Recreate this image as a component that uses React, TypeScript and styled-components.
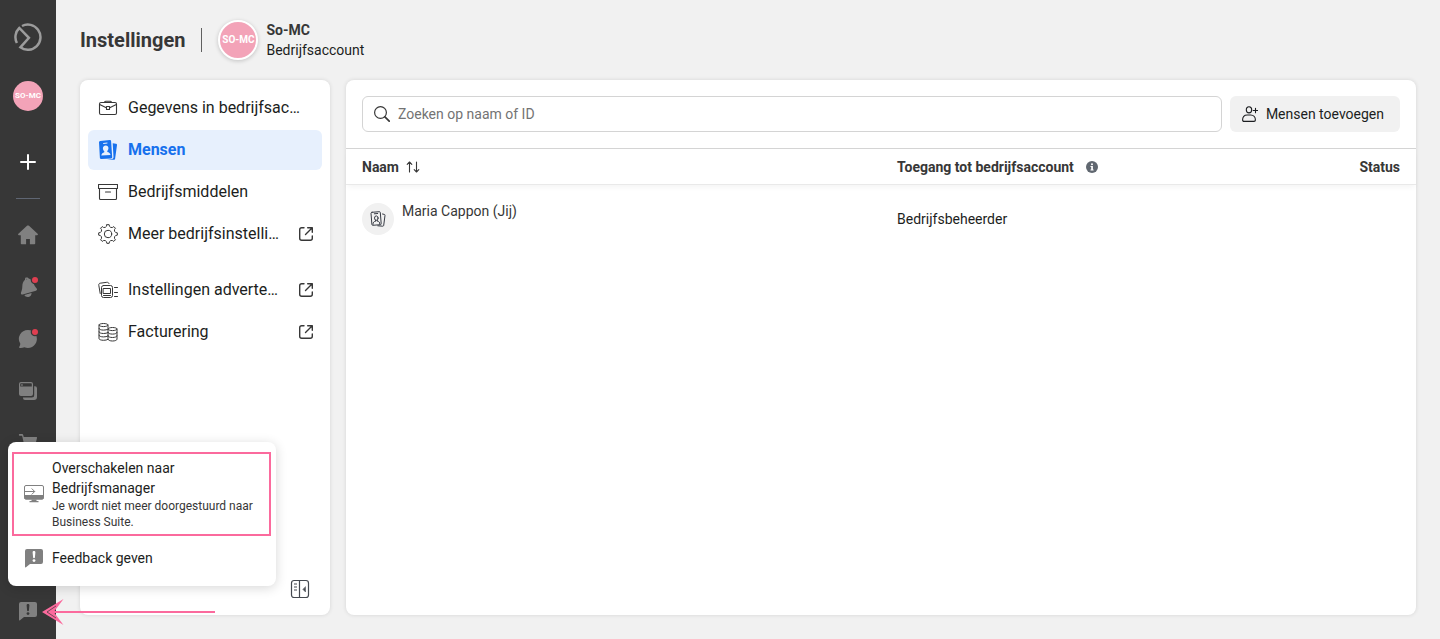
import React from "react";
import styled, { createGlobalStyle } from "styled-components";

const GlobalStyle = createGlobalStyle`
  *, *::before, *::after { box-sizing: border-box; }
  body {
    margin: 0;
    background: #f1f1f1;
    color: #1c1e21;
    font-family: Roboto, "Liberation Sans", sans-serif;
    font-size: 14px;
    line-height: 20px;
  }
  button, input { font: inherit; color: inherit; }
  a { color: inherit; text-decoration: none; }
  svg { display: block; flex: none; }
`;

/* ---------- Layout ---------- */

const Shell = styled.div`
  display: flex;
  min-height: 100vh;
`;

const Rail = styled.nav`
  position: sticky;
  top: 0;
  z-index: 2;
  flex: none;
  display: flex;
  flex-direction: column;
  align-items: center;
  width: 56px;
  height: 100vh;
  padding-bottom: 6px;
  background: #373737;
`;

const RailItems = styled.div`
  flex: 1;
  min-height: 0;
  overflow: hidden;
  display: flex;
  flex-direction: column;
  align-items: center;
  gap: 8px;
`;

const RailButton = styled.button<{ $color?: string }>`
  flex: none;
  display: grid;
  place-items: center;
  width: 44px;
  height: 44px;
  padding: 0;
  border: 0;
  background: none;
  color: ${(p) => p.$color ?? "#808080"};
  cursor: pointer;
`;

const RailLogo = styled.a`
  flex: none;
  display: grid;
  place-items: center;
  width: 56px;
  height: 74px;
  color: #9c9c9c;
`;

const RailAdd = styled(RailButton)`
  margin-top: 22px;
`;

const RailRule = styled.hr`
  flex: none;
  width: 24px;
  height: 1px;
  margin: 14px 0;
  border: 0;
  background: #5f6673;
`;

const RailFooter = styled.div`
  position: relative;
  flex: none;
`;

const Avatar = styled.span<{ $size: number; $ring?: boolean }>`
  flex: none;
  display: grid;
  place-items: center;
  width: ${(p) => p.$size}px;
  height: ${(p) => p.$size}px;
  border: ${(p) => (p.$ring ? "2px solid #fff" : "0")};
  border-radius: 50%;
  background: #f3a3b8;
  box-shadow: ${(p) => (p.$ring ? "0 1px 4px rgba(0, 0, 0, 0.2)" : "none")};
  color: #fff;
  font-size: ${(p) => (p.$ring ? 10 : 8)}px;
  font-weight: 700;
  line-height: 12px;
  white-space: nowrap;
`;

const Main = styled.main`
  flex: 1;
  min-width: 0;
  display: flex;
  flex-direction: column;
  padding: 0 24px 24px;
`;

const Header = styled.header`
  display: flex;
  align-items: center;
  gap: 16px;
  height: 80px;
`;

const Title = styled.h1`
  margin: 0;
  color: #373737;
  font-size: 20px;
  font-weight: 700;
  line-height: 24px;
`;

const HeaderRule = styled.span`
  width: 1px;
  height: 24px;
  background: #606060;
`;

const Account = styled.div`
  display: flex;
  align-items: center;
  gap: 8px;
`;

const AccountName = styled.div`
  color: #373737;
  font-weight: 700;
`;

const Columns = styled.div`
  flex: 1;
  display: flex;
  gap: 16px;
`;

const Card = styled.section`
  border-radius: 8px;
  background: #fff;
  box-shadow: 0 0 4px rgba(0, 0, 0, 0.12);
`;

/* ---------- Settings menu ---------- */

const MenuCard = styled(Card)`
  flex: none;
  display: flex;
  flex-direction: column;
  width: 250px;
  padding: 8px;
`;

const MenuGroup = styled.nav`
  display: flex;
  flex-direction: column;
  gap: 2px;
  margin-bottom: 16px;
`;

const MenuLink = styled.a<{ $active?: boolean }>`
  display: flex;
  align-items: center;
  gap: 10px;
  height: 40px;
  padding: 0 8px 0 10px;
  border-radius: 6px;
  background: ${(p) => (p.$active ? "#e7f0fd" : "transparent")};
  color: ${(p) => (p.$active ? "#1771ed" : "#373737")};
  font-size: 16px;
  font-weight: ${(p) => (p.$active ? 700 : 400)};
`;

const MenuLabel = styled.span<{ $active?: boolean }>`
  flex: 1;
  min-width: 0;
  overflow: hidden;
  color: ${(p) => (p.$active ? "inherit" : "#1c1e21")};
  text-overflow: ellipsis;
  white-space: nowrap;
`;

const CollapseButton = styled.button`
  align-self: flex-end;
  display: grid;
  place-items: center;
  width: 44px;
  height: 36px;
  margin-top: auto;
  padding: 0;
  border: 0;
  background: none;
  color: #444950;
  cursor: pointer;
`;

/* ---------- People ---------- */

const PeopleCard = styled(Card)`
  flex: 1;
  min-width: 0;
`;

const Toolbar = styled.div`
  display: flex;
  gap: 8px;
  padding: 16px;
`;

const SearchBox = styled.label`
  flex: 1;
  display: flex;
  align-items: center;
  gap: 8px;
  height: 36px;
  padding: 0 11px;
  border: 1px solid #d4d4d4;
  border-radius: 6px;
  color: #373737;
`;

const SearchInput = styled.input`
  flex: 1;
  min-width: 0;
  padding: 0;
  border: 0;
  outline: 0;
  background: none;
  &::placeholder { color: #737373; opacity: 1; }
`;

const AddButton = styled.button`
  display: flex;
  align-items: center;
  gap: 8px;
  height: 36px;
  padding: 0 16px 0 12px;
  border: 0;
  border-radius: 6px;
  background: #f1f1f1;
  cursor: pointer;
`;

const Table = styled.table`
  width: 100%;
  border-top: 1px solid #d4d4d4;
  border-spacing: 0;
  table-layout: fixed;
`;

const HeadRow = styled.tr`
  height: 36px;
  box-shadow: 0 4px 6px -2px rgba(0, 0, 0, 0.05);
`;

const HeadCell = styled.th<{ $width: string; $end?: boolean }>`
  width: ${(p) => p.$width};
  padding: 0 16px;
  border-bottom: 1px solid #e9e9e9;
  color: #373737;
  font-weight: 700;
  text-align: ${(p) => (p.$end ? "right" : "left")};
`;

const HeadLabel = styled.span<{ $gap: number }>`
  display: flex;
  align-items: center;
  gap: ${(p) => p.$gap}px;
`;

const SortButton = styled.button`
  padding: 0;
  border: 0;
  background: none;
  cursor: pointer;
`;

const Cell = styled.td`
  height: 68px;
  padding: 0 16px;
`;

const Person = styled.div`
  display: flex;
  gap: 8px;
  color: #373737;
  line-height: 16px;
`;

const PersonBadge = styled.span`
  display: grid;
  place-items: center;
  width: 32px;
  height: 32px;
  border-radius: 50%;
  background: #f1f1f1;
  color: #373b44;
`;

/* ---------- Feedback pop-up ---------- */

const Popup = styled.div`
  position: absolute;
  bottom: 47px;
  left: 2px;
  display: flex;
  flex-direction: column;
  gap: 2px;
  width: 268px;
  padding: 10px 5px 8px 4px;
  border-radius: 8px;
  background: #fff;
  box-shadow: 0 2px 12px rgba(0, 0, 0, 0.16);
`;

const PopupItem = styled.button<{ $marked?: boolean }>`
  display: flex;
  align-items: center;
  gap: 8px;
  min-height: 40px;
  padding: 4px 10px;
  border: 2px solid ${(p) => (p.$marked ? "#fb6a9d" : "transparent")};
  background: none;
  text-align: left;
  cursor: pointer;
  color: #808080;
`;

const PopupText = styled.span`
  color: #1c1e21;
`;

const PopupNote = styled.span`
  display: block;
  color: #373737;
  font-size: 12px;
  line-height: 16px;
`;

const Pointer = styled.svg`
  position: absolute;
  bottom: 7px;
  left: 36px;
  pointer-events: none;
`;

/* ---------- Icons ---------- */

type IconProps = { size?: number; w?: number; children: React.ReactNode };

const Line = ({ size = 20, w = 1, children }: IconProps) => (
  <svg width={size} height={size} viewBox={`0 0 ${size} ${size}`} fill="none" stroke="currentColor"
    strokeWidth={w} strokeLinecap="round" strokeLinejoin="round" aria-hidden="true">{children}</svg>
);

const Solid = ({ size = 20, children }: IconProps) => (
  <svg width={size} height={size} viewBox={`0 0 ${size} ${size}`} fill="currentColor" aria-hidden="true">{children}</svg>
);

const LogoIcon = () => (
  <Line size={28} w={2.5}>
    <path d="M8 3A12.6 12.6 0 1 1 6.400 24.300L14.900 14.900 5.300 5A12.6 12.6 0 0 0 2.900 20" strokeLinecap="butt" strokeLinejoin="miter" />
  </Line>
);

const PlusIcon = () => (
  <Line w={2}><path d="M10 3v14M3 10h14" /></Line>
);

const HomeIcon = () => (
  <Solid>
    <path d="M10 .4c.4 0 .7.1 1 .4l8.6 8c.6.6.3 1.5-.6 1.5h-1.8v8.200c0 .5-.3.8-.8.8h-4.500v-5.200H8.100v5.200H3.600c-.5 0-.8-.3-.8-.8v-8.200H1c-.9 0-1.200-.9-.6-1.500l8.600-8c.3-.3.6-.4 1-.4Z" />
  </Solid>
);

const BellIcon = () => (
  <Solid>
    <path d="M7.900.6c1.200-.5 2.400 0 2.800 1 2.700.7 4.200 2.600 5.100 5.200.7 2 1.500 3.400 2.700 4.500.9.900.6 2.200-.6 2.500L4.700 17.400c-1.300.3-2.200-.7-1.700-2 .9-2 1.200-3.700 1.300-6 .1-2.900.900-5 2.700-6.600-.1-1 .1-1.800.9-2.200Zm.8 1.100c-.4.100-.5.500-.4.900l1-.3c-.1-.4-.3-.7-.6-.6Z" />
    <path d="M6.300 18l7.200-2c.1 2-1.100 3.500-3 3.900-1.900.3-3.500-.5-4.200-1.900Z" />
    <circle cx="17" cy="3" r="4.300" fill="#373737" />
    <circle cx="17" cy="3" r="3" fill="#e03e50" />
  </Solid>
);

const ChatIcon = () => (
  <Solid>
    <path d="M10 1a9 9 0 1 1-3.600 17.300c-1.500.6-3 .8-4.600.7-.7 0-.9-.7-.5-1.200.7-.9 1-1.900 1-3A9 9 0 0 1 10 1Z" />
    <circle cx="17" cy="3" r="4.300" fill="#373737" />
    <circle cx="17" cy="3" r="3" fill="#e03e50" />
  </Solid>
);

const PagesIcon = () => (
  <Solid>
    <path d="M5 16.500h8.700a2.500 2.500 0 0 0 2.500-2.500V5.200h.8a2 2 0 0 1 2 2V16a3 3 0 0 1-3 3H7a2 2 0 0 1-2-2Z" />
    <path fillRule="evenodd" d="M3 1h10a2 2 0 0 1 2 2v10a2 2 0 0 1-2 2H3a2 2 0 0 1-2-2V3a2 2 0 0 1 2-2Zm-.8 1.900v2.700h11.600V2.900c0-.4-.3-.7-.7-.7H2.900c-.4 0-.7.3-.7.7Zm1 .4h1.500v1.500H3.200Z" />
  </Solid>
);

const CartIcon = () => (
  <Solid>
    <path d="M1.700 1h2c.9 0 1.400.5 1.600 1.300l.4 1.700h12.500c.6 0 1 .5.8 1.100l-1.700 7c-.1.5-.6.9-1.200.9H6.500L4.100 2.700H1.700a.85.85 0 0 1 0-1.700Z" />
    <circle cx="7.500" cy="17" r="2" /><circle cx="15" cy="17" r="2" />
  </Solid>
);

const FeedbackIcon = ({ mark }: { mark: string }) => (
  <Solid>
    <path d="M3 1h14a2 2 0 0 1 2 2v11a2 2 0 0 1-2 2H6l-4 3.200c-.5.4-1 .1-1-.5V3a2 2 0 0 1 2-2Z" />
    <path d="M8.600 4.200c0-.8.6-1.200 1.400-1.200s1.400.4 1.400 1.200l-.5 5.300c0 .5-.4.8-.9.8s-.9-.3-.9-.8Z" fill={mark} />
    <circle cx="10" cy="12.600" r="1.400" fill={mark} />
  </Solid>
);

const BriefcaseIcon = () => (
  <Line w={1.1}>
    <rect x="1.500" y="4.500" width="17" height="12" rx="1.500" />
    <path d="M6.500 4.300c0-.6.5-1 1.200-1h4.600c.7 0 1.200.4 1.200 1M1.700 6.500l6.600 3.300M18.300 6.500l-6.600 3.300" />
    <rect x="8.500" y="8.500" width="3" height="3" />
  </Line>
);

const PeopleSolidIcon = () => (
  <Solid>
    <path fillRule="evenodd" d="M2.200 1l9.600-.9c.7 0 1.200.4 1.300 1.100l1.100 16c0 .7-.4 1.200-1.100 1.200l-10 .5c-.7 0-1.100-.4-1.200-1L1 2.300C1 1.600 1.500 1.100 2.200 1Zm3 1.900v1l4.200-.4v-1ZM7.700 5.400c-1.800.1-2.900 1.300-2.800 3 .1 1.200.6 2.200 1.400 2.800v1c-1.500.4-2.700 1.400-3 3.300l9.200-.5c-.3-1.900-1.500-2.700-3.200-3v-1.100c.8-.6 1.200-1.600 1.100-2.800 0-1.700-1.100-2.800-2.700-2.700Z" />
    <path d="M14.700 3.200l3.300.5c.7.1 1 .5 1 1.200l-1.900 13.800c-.1.7-.6 1-1.200 1l-6.900-.2 5-.6c1-.2 1.600-.9 1.500-2Z" />
  </Solid>
);

const PeopleLineIcon = () => (
  <Line size={16}>
    <path d="M2 1.300l7.400-.6c.5 0 .9.300.9.800l.9 11.300c0 .5-.3.900-.8.9l-7.600.6c-.5 0-.9-.3-.9-.8L1 2.300c0-.5.4-.9 1-1ZM12.500 3l1.800.4c.5.100.8.5.7 1l-1.300 10c-.1.5-.4.8-.9.8l-5-.4" />
    <path d="M4.300 2.800l3.400-.3M3 13.400c0-2 .8-3 2.600-3.100v-1M9.800 12.900c-.1-1.800-.8-2.700-2.500-2.700v-1" />
    <ellipse cx="6.300" cy="7.100" rx="1.800" ry="2.200" />
  </Line>
);

const ArchiveIcon = () => (
  <Line w={1.1}>
    <path d="M.5 2.500h19v4H.5ZM1.500 6.500v10c0 .6.4 1 1 1h15c.6 0 1-.4 1-1v-10M7.500 10h5" />
  </Line>
);

const gearOutline = (teeth: number) => {
  const at = (r: number, deg: number) => {
    const rad = (deg * Math.PI) / 180;
    return `${(10 + r * Math.sin(rad)).toFixed(2)} ${(10 - r * Math.cos(rad)).toFixed(2)}`;
  };
  const step = 360 / teeth;
  let d = "";
  for (let i = 0; i < teeth; i++) {
    const a = i * step;
    d += `${i ? "L" : "M"}${at(9.4, a - 7)}L${at(9.4, a + 7)}L${at(7.8, a + 11)}Q${at(6.6, a + step / 2)} ${at(7.8, a + step - 11)}`;
  }
  return d + "Z";
};

const GearIcon = () => (
  <Line><path d={gearOutline(8)} /><circle cx="10" cy="10" r="3.700" /></Line>
);

const AdsIcon = () => (
  <Line w={1}>
    <path d="M2.200 13.500L.8 5.300c-.2-1.200.3-1.900 1.400-2.100l6.600-.9c1.100-.1 1.800.2 2.200 1.200" />
    <rect x="3.500" y="5.500" width="11" height="12" rx="2" />
    <rect x="5.500" y="8.500" width="7" height="5" />
    <path d="M5.500 15.500h7M16.500 7.500h3M16.500 12.500h3M16.500 16.500h3" />
  </Line>
);

const CoinsIcon = () => (
  <Line>
    <path d="M10 6V3c0-.8-2-1.500-4.500-1.500S1 2.200 1 3v13.500c0 1 2 1.800 4.500 1.800 1.800 0 3.500-.3 4.500-.9M1 3c0 .9 2 1.600 4.500 1.600S10 3.900 10 3M1 6.400c0 1 2 1.700 4.500 1.700 1.800 0 3.500-.3 4.500-.9M1 9.800c0 1 2 1.700 4.500 1.700 1.800 0 3.500-.3 4.500-.9M1 13.200c0 1 2 1.700 4.500 1.700 1.800 0 3.500-.3 4.500-.9" />
    <path d="M10 7c0-.8 2-1.500 4.500-1.500S19 6.200 19 7v10.200c0 1-2 1.800-4.500 1.800s-4.500-.8-4.500-1.800ZM10 7c0 .9 2 1.600 4.500 1.600S19 7.900 19 7M10 10.400c0 1 2 1.700 4.500 1.700s4.500-.7 4.500-1.700M10 13.800c0 1 2 1.700 4.500 1.700s4.500-.7 4.500-1.700" />
  </Line>
);

const ExternalIcon = () => (
  <Line size={16} w={1.400}>
    <path d="M6 1.700H3.700c-1.200 0-2 .8-2 2v8.600c0 1.200.8 2 2 2h8.600c1.200 0 2-.8 2-2V10M7.500 8.500L14 2M9.700 1.700h4.600v4.600" />
  </Line>
);

const CollapseIcon = () => (
  <Line w={1.200}>
    <rect x="1.500" y="1.500" width="17" height="17" rx="2.500" />
    <path d="M9.500 1.500v17M4 5h3M4 8h3M4 11h3" strokeLinecap="butt" />
    <path d="M15.500 8v5L13 10.500Z" fill="currentColor" strokeWidth=".5" />
  </Line>
);

const SearchIcon = () => (
  <Line size={16} w={1.200}>
    <circle cx="6.500" cy="6.500" r="5.900" /><path d="M10.900 10.900l4.300 4.300" strokeWidth="1.700" />
  </Line>
);

const AddPersonIcon = () => (
  <Line size={16} w={1.100}>
    <ellipse cx="7" cy="3.800" rx="2.700" ry="3.100" />
    <path d="M2 15.400c-.9 0-1.400-.5-1.400-1.300C.6 11 2.500 9 5.200 9h3.600c2.700 0 4.600 2 4.600 5.100 0 .8-.5 1.300-1.400 1.300ZM13.500 2.200v4.600M11.200 4.500h4.600" />
  </Line>
);

const SortIcon = () => (
  <Line size={16} w={1.100}>
    <path d="M4.500 13V3.200M2.200 5.300l2.300-2.300 2.300 2.300M11.500 3v9.800M9.200 10.700l2.300 2.300 2.300-2.300" />
  </Line>
);

const InfoIcon = () => (
  <svg width="12" height="12" viewBox="0 0 12 12" role="img" aria-label="Info">
    <circle cx="6" cy="6" r="6" fill="#606770" />
    <circle cx="6" cy="3.200" r="1" fill="#fff" />
    <path d="M4.500 5h2.400v3.600h.7v.9H4.500v-.9h.7V5.900h-.7Z" fill="#fff" />
  </svg>
);

const MonitorIcon = () => (
  <svg width="20" height="20" viewBox="0 0 20 20" fill="none" stroke="#808080" aria-hidden="true">
    <rect x=".5" y="1.500" width="19" height="13.500" rx="1.500" />
    <path d="M.5 11.500h19v2.200c0 .7-.5 1.300-1.300 1.300H1.800c-.8 0-1.300-.6-1.300-1.300Z" fill="#808080" />
    <path d="M0 7.500h10.700M7.700 4.500l3 3-3 3" />
    <path d="M7.500 15.500h5V17h2v1.300h-9V17h2Z" fill="#808080" stroke="none" />
  </svg>
);

/* ---------- Page ---------- */

type LinkItem = { label: string; icon: React.ReactNode; active?: boolean; external?: boolean };

const mainLinks: LinkItem[] = [
  { label: "Gegevens in bedrijfsac…", icon: <BriefcaseIcon /> },
  { label: "Mensen", icon: <PeopleSolidIcon />, active: true },
  { label: "Bedrijfsmiddelen", icon: <ArchiveIcon /> },
  { label: "Meer bedrijfsinstelli…", icon: <GearIcon />, external: true },
];

const moreLinks: LinkItem[] = [
  { label: "Instellingen adverte…", icon: <AdsIcon />, external: true },
  { label: "Facturering", icon: <CoinsIcon />, external: true },
];

const Menu = ({ items, name }: { items: LinkItem[]; name: string }) => (
  <MenuGroup aria-label={name}>
    {items.map((item) => (
      <MenuLink key={item.label} href="#" $active={item.active} aria-current={item.active ? "page" : undefined}>
        {item.icon}
        <MenuLabel $active={item.active}>{item.label}</MenuLabel>
        {item.external && <ExternalIcon />}
      </MenuLink>
    ))}
  </MenuGroup>
);

export default function App() {
  return (
    <>
      <GlobalStyle />
      <Shell>
        <Rail aria-label="Navigatie">
          <RailLogo href="#" aria-label="Start"><LogoIcon /></RailLogo>
          <RailButton aria-label="Account"><Avatar $size={30}>SO-MC</Avatar></RailButton>
          <RailAdd $color="#fff" aria-label="Maken"><PlusIcon /></RailAdd>
          <RailRule />
          <RailItems>
            <RailButton aria-label="Home"><HomeIcon /></RailButton>
            <RailButton aria-label="Meldingen"><BellIcon /></RailButton>
            <RailButton aria-label="Inbox"><ChatIcon /></RailButton>
            <RailButton aria-label="Berichten"><PagesIcon /></RailButton>
            <RailButton aria-label="Winkel"><CartIcon /></RailButton>
          </RailItems>
          <RailFooter>
            <RailButton aria-label="Feedback" aria-expanded="true"><FeedbackIcon mark="#373737" /></RailButton>
            <Popup>
              <PopupItem $marked>
                <MonitorIcon />
                <PopupText>
                  Overschakelen naar Bedrijfsmanager
                  <PopupNote>Je wordt niet meer doorgestuurd naar Business Suite.</PopupNote>
                </PopupText>
              </PopupItem>
              <PopupItem>
                <FeedbackIcon mark="#fff" />
                <PopupText>Feedback geven</PopupText>
              </PopupItem>
            </Popup>
            <Pointer width="174" height="28" viewBox="0 0 174 28" fill="#fb6a9d" aria-hidden="true">
              <path d="M0 14L21.500 1 12.500 13H173v2H12.500l9 12Z" />
              <path d="M5 14l9-6M5 14l9 6" stroke="#373737" strokeWidth=".7" />
              <path d="M8 13h8v2H8Z" />
            </Pointer>
          </RailFooter>
        </Rail>

        <Main>
          <Header>
            <Title>Instellingen</Title>
            <HeaderRule />
            <Account>
              <Avatar $size={40} $ring>SO-MC</Avatar>
              <div>
                <AccountName>So-MC</AccountName>
                <div>Bedrijfsaccount</div>
              </div>
            </Account>
          </Header>

          <Columns>
            <MenuCard>
              <Menu items={mainLinks} name="Instellingen" />
              <Menu items={moreLinks} name="Meer" />
              <CollapseButton aria-label="Menu samenvouwen"><CollapseIcon /></CollapseButton>
            </MenuCard>

            <PeopleCard>
              <Toolbar>
                <SearchBox>
                  <SearchIcon />
                  <SearchInput type="text" placeholder="Zoeken op naam of ID" aria-label="Zoeken op naam of ID" />
                </SearchBox>
                <AddButton><AddPersonIcon />Mensen toevoegen</AddButton>
              </Toolbar>
              <Table>
                <thead>
                  <HeadRow>
                    <HeadCell $width="50%">
                      <HeadLabel $gap={6}>Naam<SortButton aria-label="Sorteren"><SortIcon /></SortButton></HeadLabel>
                    </HeadCell>
                    <HeadCell $width="35%">
                      <HeadLabel $gap={12}>Toegang tot bedrijfsaccount<InfoIcon /></HeadLabel>
                    </HeadCell>
                    <HeadCell $width="15%" $end>Status</HeadCell>
                  </HeadRow>
                </thead>
                <tbody>
                  <tr>
                    <Cell>
                      <Person>
                        <PersonBadge><PeopleLineIcon /></PersonBadge>
                        Maria Cappon (Jij)
                      </Person>
                    </Cell>
                    <Cell>Bedrijfsbeheerder</Cell>
                    <Cell />
                  </tr>
                </tbody>
              </Table>
            </PeopleCard>
          </Columns>
        </Main>
      </Shell>
    </>
  );
}
